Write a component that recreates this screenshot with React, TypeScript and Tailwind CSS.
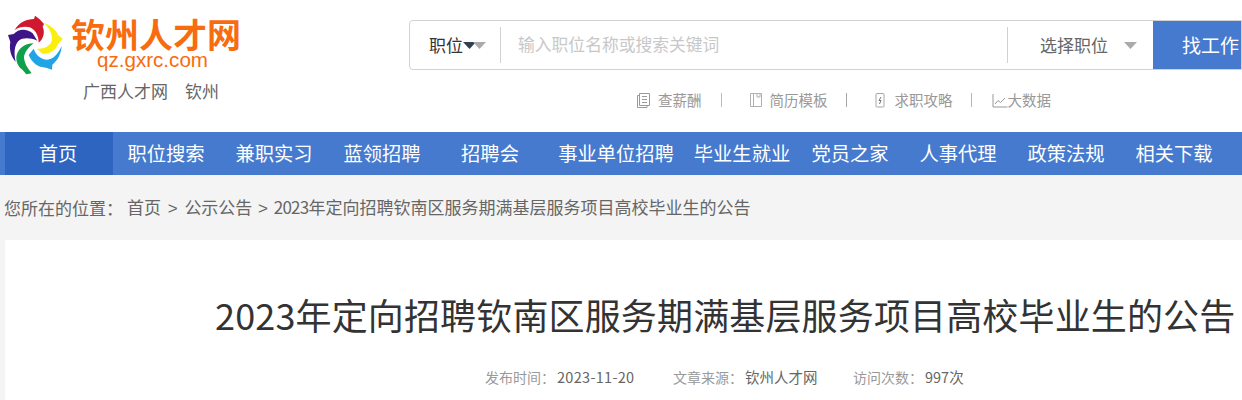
const navItems = [
  { label: "首页", width: "w-[108px]", active: true },
  { label: "职位搜索", width: "w-[108px]" },
  { label: "兼职实习", width: "w-[108px]" },
  { label: "蓝领招聘", width: "w-[108px]" },
  { label: "招聘会", width: "w-[108px]" },
  { label: "事业单位招聘", width: "w-[144px]" },
  { label: "毕业生就业", width: "w-[108px]" },
  { label: "党员之家", width: "w-[108px]" },
  { label: "人事代理", width: "w-[108px]" },
  { label: "政策法规", width: "w-[108px]" },
  { label: "相关下载", width: "w-[108px]" },
];

function Logo() {
  return (
    <svg width="57" height="60" viewBox="20 15 171 180" className="shrink-0">
      <path d="M43 60 C55 38 78 27 101 27 L104 17 L118 28 L131 42 L127 50 C134 65 131 85 115 98 C115 75 104 58 88 52 C72 48 56 52 43 60 Z" fill="#d0182f" />
      <path d="M130 38 C150 45 168 60 174 76 L187 86 L172 104 C165 122 145 133 126 131 L110 116 C135 118 152 105 155 90 C157 70 145 52 130 38 Z" fill="#f9ee0e" />
      <path d="M184 108 C183 130 172 152 156 164 L155 179 L137 173 L120 170 C105 165 92 152 85 135 L100 116 C106 135 122 148 140 149 C160 148 174 130 184 108 Z" fill="#20a4e6" />
      <path d="M100 100 C72 100 50 118 48 142 C48 160 55 172 67 180 L78 193 L94 190 C82 175 72 160 71 142 C72 128 84 112 100 100 Z" fill="#0fa04c" />
      <path d="M23 75 L40 72 C55 55 80 55 97 70 L111 92 C90 83 68 82 55 92 C42 105 40 130 46 155 C32 140 26 118 30 96 Z" fill="#3c1588" />
    </svg>
  );
}

function DownArrow({ color }: { color: string }) {
  return (
    <svg width="13" height="7" viewBox="0 0 13 7">
      <path d="M0 0 H13 L6.5 7 Z" fill={color} />
    </svg>
  );
}

function DocIcon() {
  return (
    <svg width="15" height="16" viewBox="0 0 15 16" fill="none" stroke="#9a9a9a">
      <path d="M3.5 1.5 H13.5 V13.5 H3.5 Z M3.5 3.5 H1.5 V15.5 H11 V13.5" />
      <path d="M6 4.5 H11 M6 7.5 H11 M6 10.5 H11" />
    </svg>
  );
}

function BookIcon() {
  return (
    <svg width="14" height="16" viewBox="0 0 14 16" fill="none" stroke="#b0b0b0">
      <path d="M1.5 1.5 H12.5 V14.5 H1.5 Z M4.5 1.5 V14.5 M8 1.5 V5 H11 V1.5" />
    </svg>
  );
}

function PhoneIcon() {
  return (
    <svg width="10" height="16" viewBox="0 0 10 16" fill="none" stroke="#a8a8a8">
      <rect x="1" y="1.5" width="8" height="13.5" rx="1" />
      <path d="M6 5 L4 8.5 H6 L4.5 12" stroke="#777" />
    </svg>
  );
}

function ChartIcon() {
  return (
    <svg width="16" height="15" viewBox="0 0 16 15" fill="none" stroke="#999">
      <path d="M1 1 V14 H15.5" />
      <path d="M3 11 L6 7.5 L8.5 9.5 L13 5" />
    </svg>
  );
}

function Divider({ className }: { className: string }) {
  return <span className={`h-[14px] w-px ${className}`} />;
}

export default function App() {
  return (
    <div className="h-[400px] w-[1242px] overflow-hidden bg-white font-['Microsoft_YaHei','Noto_Sans_CJK_SC',sans-serif]">
      <header className="flex h-[132px] pl-[7px]">
        <div className="w-[402px] pt-[15px]">
          <div className="flex">
            <Logo />
            <div className="ml-[8px] flex w-[168px] flex-col items-center">
              <div className="text-[34px] leading-[38px] font-bold whitespace-nowrap text-[#f86c10]">钦州人才网</div>
              <div className="-ml-[7px] font-['Liberation_Sans',sans-serif] text-[20.6px] leading-[14px] text-[#f86c10]">
                qz.gxrc.com
              </div>
            </div>
          </div>
          <div className="mt-[4px] ml-[76px] flex gap-[17px] text-[17px] leading-[24px] text-[#666]">
            <span>广西人才网</span>
            <span>钦州</span>
          </div>
        </div>
        <div className="w-[833px] pt-[20px]">
          <div className="flex h-[50px] w-[833px] items-center overflow-hidden rounded-l-[4px] border border-[#d2d2d2]">
            <div className="flex h-[36px] w-[91px] items-center border-r border-[#d2d2d2] pl-[19px] text-[17px] text-[#333]">
              职位
              <DownArrow color="#333f50" />
              <span className="-ml-[3px]">
                <DownArrow color="#aaa" />
              </span>
            </div>
            <div className="w-[506px] pl-[17px] text-[16.8px] text-[#c8c8c8]">输入职位名称或搜索关键词</div>
            <div className="flex h-[36px] w-[146px] items-center border-l border-[#d2d2d2] pl-[32px] text-[17px] text-[#666]">
              选择职位
              <span className="ml-[16px] flex">
                <DownArrow color="#aaa" />
              </span>
            </div>
            <div className="flex h-[50px] flex-1 items-center bg-[#467ace] pl-[29px] text-[19px] whitespace-nowrap text-white">
              找工作
            </div>
          </div>
          <div className="mt-[20px] flex h-[20px] items-center pl-[227px] text-[14.5px] text-[#999]">
            <DocIcon />
            <span className="ml-[7px]">查薪酬</span>
            <Divider className="ml-[19px] bg-[#c9b8a8]" />
            <span className="ml-[27px] flex">
              <BookIcon />
            </span>
            <span className="ml-[7px]">简历模板</span>
            <Divider className="ml-[18px] bg-[#a8a8a8]" />
            <span className="ml-[28px] flex">
              <PhoneIcon />
            </span>
            <span className="ml-[10px]">求职攻略</span>
            <Divider className="ml-[18px] bg-[#a8b8c8]" />
            <span className="ml-[20px] flex">
              <ChartIcon />
            </span>
            <span>大数据</span>
          </div>
        </div>
      </header>

      <nav className="flex h-[43px] bg-[#467ace] pl-[5px]">
        {navItems.map((item) => (
          <a
            key={item.label}
            className={`flex items-center justify-center pr-[2px] text-[19.3px] whitespace-nowrap text-white ${item.width} ${item.active ? "bg-[#2d65c1]" : ""}`}
          >
            {item.label}
          </a>
        ))}
      </nav>

      <div className="h-[225px] bg-[#f4f4f4] pl-[5px]">
        <div className="flex h-[65px] items-center text-[17px] whitespace-nowrap text-[#666]">
          <span className="-ml-[1px] w-[123px]">您所在的位置：</span>
          <span className="whitespace-pre">
            首页<span className="mx-[2px] font-['Liberation_Sans',sans-serif]"> &gt; </span>公示公告
            <span className="mx-[1px] font-['Liberation_Sans',sans-serif]"> &gt; </span>
            <span className="tracking-[-0.75px]">2023</span>年定向招聘钦南区服务期满基层服务项目高校毕业生的公告
          </span>
        </div>
        <main className="h-[160px] bg-white pl-[210px]">
          <h1 className="pt-[47px] text-[36px] leading-[54px] font-normal tracking-[0.15px] whitespace-nowrap text-[#333]">
            2023年定向招聘钦南区服务期满基层服务项目高校毕业生的公告
          </h1>
          <div className="mt-[26px] flex pl-[270px] text-[14px] leading-[20px] whitespace-nowrap text-[#999]">
            <span className="w-[188px]">
              发布时间：<span className="ml-[2px] text-[14.5px] tracking-[0.3px] text-[#666]">2023-11-20</span>
            </span>
            <span className="w-[180px]">
              文章来源：<span className="ml-[2px] text-[14.5px] text-[#666]">钦州人才网</span>
            </span>
            <span>
              访问次数：<span className="ml-[2px] text-[14.5px] text-[#666]">997次</span>
            </span>
          </div>
        </main>
      </div>
    </div>
  );
}
